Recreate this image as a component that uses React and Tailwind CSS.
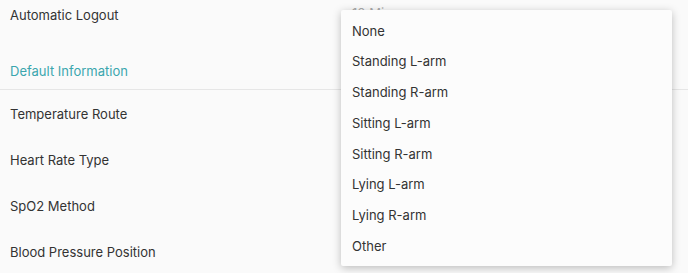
import { useState } from "react";

const ROWS = ["Temperature Route", "Heart Rate Type", "SpO2 Method", "Blood Pressure Position"];
const OPTIONS = [
  "None",
  "Standing L-arm",
  "Standing R-arm",
  "Sitting L-arm",
  "Sitting R-arm",
  "Lying L-arm",
  "Lying R-arm",
  "Other",
];

const SettingRow = ({ label }) => (
  <div className="flex h-[46px] items-center px-[10px] text-[13px] text-[#333]">{label}</div>
);

export default function App() {
  const [value, setValue] = useState("None");

  return (
    <div
      className="relative h-[273px] w-[688px] overflow-hidden bg-[#fafafa]"
      style={{ fontFamily: "Inter, 'Liberation Sans', sans-serif" }}
    >
      <div className="pt-[2px]">
        <div className="flex h-[28px] items-center px-[10px] text-[13px] text-[#333]">
          <span>Automatic Logout</span>
        </div>
        <div className="mt-[25px] flex h-[35px] items-center border-b border-[#e6e6e6] px-[10px] text-[13px] text-[#3aa6ae]">
          Default Information
        </div>
        <div className="pt-[2px]">
          {ROWS.map((r) => (
            <SettingRow key={r} label={r} />
          ))}
        </div>
      </div>

      <div className="absolute left-[352px] top-[4px] text-[13px] text-[#aaa]">10 Mins</div>

      <div className="absolute left-[341px] top-[10px] w-[331px] rounded-[2px] bg-[#fcfcfc] pb-[4px] pt-[6px] shadow-[0_2px_8px_rgba(0,0,0,0.25)]">
        {OPTIONS.map((o) => (
          <button
            key={o}
            type="button"
            onClick={() => setValue(o)}
            className={`flex h-[30.75px] w-full items-center pl-[11px] text-left text-[13px] ${
              value === o ? "text-[#333]" : "text-[#333]"
            }`}
          >
            {o}
          </button>
        ))}
      </div>
    </div>
  );
}
